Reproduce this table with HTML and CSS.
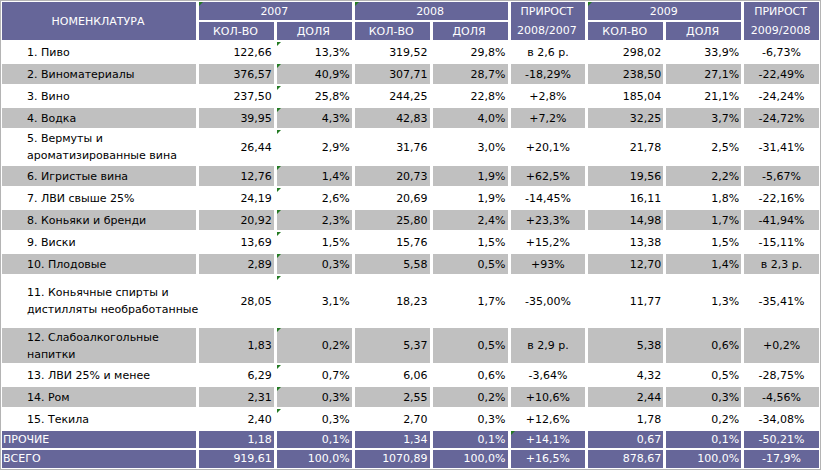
FILE: index.html
```html
<!DOCTYPE html>
<html lang="ru">
<head>
<meta charset="utf-8">
<title>Номенклатура</title>
<link rel="stylesheet" href="styles.css">
</head>
<body>
<div class="sheet">
<table class="grid">
  <colgroup>
    <col class="c-name"><col><col><col><col><col><col><col><col>
  </colgroup>
  <thead>
    <tr class="hr1">
      <th class="h" rowspan="2">НОМЕНКЛАТУРА</th>
      <th class="h m" colspan="2">2007</th>
      <th class="h m" colspan="2">2008</th>
      <th class="h two" rowspan="2">ПРИРОСТ<br>2008/2007</th>
      <th class="h m" colspan="2">2009</th>
      <th class="h two" rowspan="2">ПРИРОСТ<br>2009/2008</th>
    </tr>
    <tr class="hr2">
      <th class="h">КОЛ-ВО</th><th class="h">ДОЛЯ</th>
      <th class="h">КОЛ-ВО</th><th class="h">ДОЛЯ</th>
      <th class="h">КОЛ-ВО</th><th class="h">ДОЛЯ</th>
    </tr>
  </thead>
  <tbody>
    <tr class="r"><td class="n">1. Пиво</td><td>122,66</td><td class="m">13,3%</td><td>319,52</td><td>29,8%</td><td class="g">в 2,6 р.</td><td>298,02</td><td>33,9%</td><td class="g">-6,73%</td></tr>
    <tr class="r alt"><td class="n">2. Виноматериалы</td><td>376,57</td><td class="m">40,9%</td><td>307,71</td><td>28,7%</td><td class="g">-18,29%</td><td>238,50</td><td>27,1%</td><td class="g">-22,49%</td></tr>
    <tr class="r"><td class="n">3. Вино</td><td>237,50</td><td class="m">25,8%</td><td>244,25</td><td>22,8%</td><td class="g">+2,8%</td><td>185,04</td><td>21,1%</td><td class="g">-24,24%</td></tr>
    <tr class="r alt"><td class="n">4. Водка</td><td>39,95</td><td class="m">4,3%</td><td>42,83</td><td>4,0%</td><td class="g">+7,2%</td><td>32,25</td><td>3,7%</td><td class="g">-24,72%</td></tr>
    <tr class="r r5"><td class="n">5. Вермуты и<br>ароматизированные вина</td><td>26,44</td><td class="m">2,9%</td><td>31,76</td><td>3,0%</td><td class="g">+20,1%</td><td>21,78</td><td>2,5%</td><td class="g">-31,41%</td></tr>
    <tr class="r alt"><td class="n">6. Игристые вина</td><td>12,76</td><td class="m">1,4%</td><td>20,73</td><td>1,9%</td><td class="g">+62,5%</td><td>19,56</td><td>2,2%</td><td class="g">-5,67%</td></tr>
    <tr class="r"><td class="n">7. ЛВИ свыше 25%</td><td>24,19</td><td class="m">2,6%</td><td>20,69</td><td>1,9%</td><td class="g">-14,45%</td><td>16,11</td><td>1,8%</td><td class="g">-22,16%</td></tr>
    <tr class="r alt"><td class="n">8. Коньяки и бренди</td><td>20,92</td><td class="m">2,3%</td><td>25,80</td><td>2,4%</td><td class="g">+23,3%</td><td>14,98</td><td>1,7%</td><td class="g">-41,94%</td></tr>
    <tr class="r"><td class="n">9. Виски</td><td>13,69</td><td class="m">1,5%</td><td>15,76</td><td>1,5%</td><td class="g">+15,2%</td><td>13,38</td><td>1,5%</td><td class="g">-15,11%</td></tr>
    <tr class="r alt"><td class="n">10. Плодовые</td><td>2,89</td><td class="m">0,3%</td><td>5,58</td><td>0,5%</td><td class="g">+93%</td><td>12,70</td><td>1,4%</td><td class="g">в 2,3 р.</td></tr>
    <tr class="r r11"><td class="n">11. Коньячные спирты и<br>дистилляты необработанные</td><td>28,05</td><td class="m">3,1%</td><td>18,23</td><td>1,7%</td><td class="g">-35,00%</td><td>11,77</td><td>1,3%</td><td class="g">-35,41%</td></tr>
    <tr class="r alt r12"><td class="n">12. Слабоалкогольные<br>напитки</td><td>1,83</td><td class="m">0,2%</td><td>5,37</td><td>0,5%</td><td class="g">в 2,9 р.</td><td>5,38</td><td>0,6%</td><td class="g">+0,2%</td></tr>
    <tr class="r"><td class="n">13. ЛВИ 25% и менее</td><td>6,29</td><td class="m">0,7%</td><td>6,06</td><td>0,6%</td><td class="g">-3,64%</td><td>4,32</td><td>0,5%</td><td class="g">-28,75%</td></tr>
    <tr class="r alt"><td class="n">14. Ром</td><td>2,31</td><td class="m">0,3%</td><td>2,55</td><td>0,2%</td><td class="g">+10,6%</td><td>2,44</td><td>0,3%</td><td class="g">-4,56%</td></tr>
    <tr class="r"><td class="n">15. Текила</td><td>2,40</td><td class="m">0,3%</td><td>2,70</td><td>0,3%</td><td class="g">+12,6%</td><td>1,78</td><td>0,2%</td><td class="g">-34,08%</td></tr>
    <tr class="t t1"><td class="n">ПРОЧИЕ</td><td>1,18</td><td>0,1%</td><td>1,34</td><td>0,1%</td><td class="g m">+14,1%</td><td>0,67</td><td>0,1%</td><td class="g">-50,21%</td></tr>
    <tr class="t t2"><td class="n">ВСЕГО</td><td>919,61</td><td>100,0%</td><td>1070,89</td><td>100,0%</td><td class="g">+16,5%</td><td>878,67</td><td>100,0%</td><td class="g">-17,9%</td></tr>
  </tbody>
</table>
</div>
</body>
</html>
```

FILE: styles.css
```css
html, body {
  margin: 0;
  padding: 0;
  background: #ffffff;
}

body {
  font-family: "DejaVu Sans", Verdana, sans-serif;
  font-size: 11px;
  color: #000000;
}

.sheet {
  width: 821px;
  height: 470px;
  box-sizing: border-box;
  border: 1px solid #b4b4b4;
  overflow: hidden;
}

.grid {
  border-collapse: separate;
  border-spacing: 3px 2px;
  margin: -1px -2px;
  width: 823px;
  table-layout: fixed;
}

.c-name {
  width: 194px;
}

.grid th,
.grid td {
  padding: 0 2px 0 0;
  vertical-align: middle;
  white-space: nowrap;
}

.h {
  background: #666699;
  color: #ffffff;
  font-weight: normal;
  text-align: center;
  height: 18px;
  line-height: 17px;
  padding: 0;
}

.h.two {
  line-height: 19px;
}

.r td {
  height: 20px;
  line-height: 17px;
  text-align: right;
}

.r td.n {
  text-align: left;
  padding-left: 25px;
}

.r td.g,
.t td.g {
  text-align: center;
  padding: 0;
}

.alt td {
  background: #c0c0c0;
}

.r5 td {
  height: 34px;
}

.r11 td {
  height: 50px;
}

.r12 td {
  height: 35px;
}

.t td {
  background: #666699;
  color: #ffffff;
  text-align: right;
  line-height: 16px;
}

.t1 td {
  height: 17px;
}

.t2 td {
  height: 18px;
}

.t td.n {
  text-align: left;
  padding-left: 1px;
}

.m {
  position: relative;
}

.m::before {
  content: "";
  position: absolute;
  left: 0;
  top: 0;
  border-top: 4px solid #237a23;
  border-right: 4px solid transparent;
}
```
